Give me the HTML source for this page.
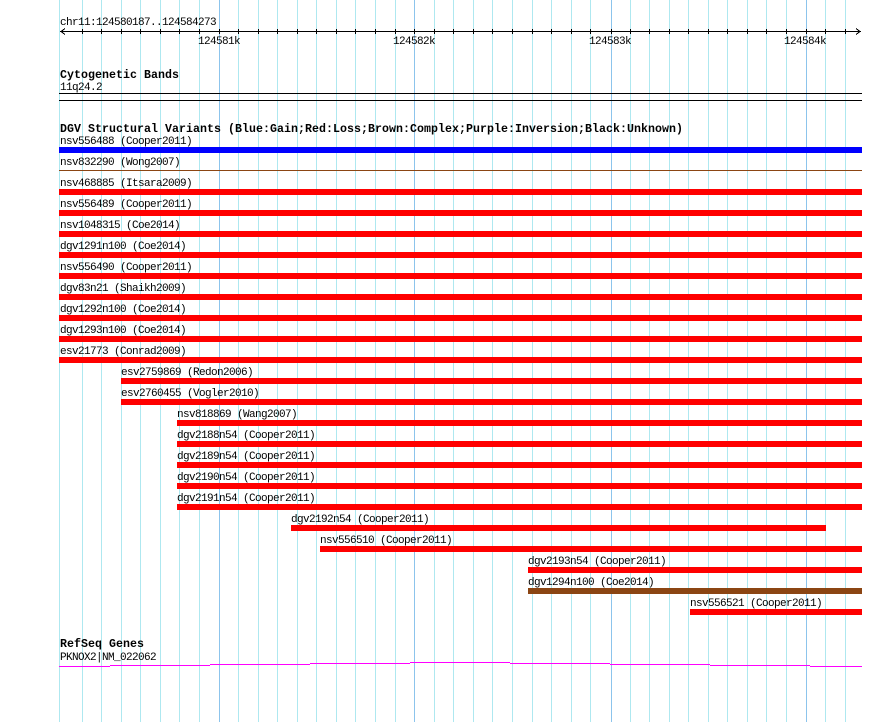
<!DOCTYPE html>
<html><head><meta charset="utf-8"><style>
html,body{margin:0;padding:0;background:#fff;width:890px;height:722px;overflow:hidden}
svg{display:block}
text{font-family:"Liberation Mono","DejaVu Sans Mono",monospace;font-size:11px;letter-spacing:-0.6px;fill:#000}
.b{font-weight:bold;font-size:11.6px;letter-spacing:0}
</style></head><body>
<svg width="890" height="722" viewBox="0 0 890 722" shape-rendering="crispEdges">
<g stroke="#aee8f0" stroke-width="1">
<line x1="59.5" y1="0" x2="59.5" y2="722"/>
<line x1="82.5" y1="0" x2="82.5" y2="722"/>
<line x1="101.5" y1="0" x2="101.5" y2="722"/>
<line x1="121.5" y1="0" x2="121.5" y2="722"/>
<line x1="140.5" y1="0" x2="140.5" y2="722"/>
<line x1="160.5" y1="0" x2="160.5" y2="722"/>
<line x1="179.5" y1="0" x2="179.5" y2="722"/>
<line x1="199.5" y1="0" x2="199.5" y2="722"/>
<line x1="238.5" y1="0" x2="238.5" y2="722"/>
<line x1="258.5" y1="0" x2="258.5" y2="722"/>
<line x1="277.5" y1="0" x2="277.5" y2="722"/>
<line x1="297.5" y1="0" x2="297.5" y2="722"/>
<line x1="316.5" y1="0" x2="316.5" y2="722"/>
<line x1="336.5" y1="0" x2="336.5" y2="722"/>
<line x1="355.5" y1="0" x2="355.5" y2="722"/>
<line x1="375.5" y1="0" x2="375.5" y2="722"/>
<line x1="395.5" y1="0" x2="395.5" y2="722"/>
<line x1="434.5" y1="0" x2="434.5" y2="722"/>
<line x1="453.5" y1="0" x2="453.5" y2="722"/>
<line x1="473.5" y1="0" x2="473.5" y2="722"/>
<line x1="492.5" y1="0" x2="492.5" y2="722"/>
<line x1="512.5" y1="0" x2="512.5" y2="722"/>
<line x1="532.5" y1="0" x2="532.5" y2="722"/>
<line x1="551.5" y1="0" x2="551.5" y2="722"/>
<line x1="571.5" y1="0" x2="571.5" y2="722"/>
<line x1="590.5" y1="0" x2="590.5" y2="722"/>
<line x1="630.5" y1="0" x2="630.5" y2="722"/>
<line x1="649.5" y1="0" x2="649.5" y2="722"/>
<line x1="669.5" y1="0" x2="669.5" y2="722"/>
<line x1="688.5" y1="0" x2="688.5" y2="722"/>
<line x1="708.5" y1="0" x2="708.5" y2="722"/>
<line x1="727.5" y1="0" x2="727.5" y2="722"/>
<line x1="747.5" y1="0" x2="747.5" y2="722"/>
<line x1="766.5" y1="0" x2="766.5" y2="722"/>
<line x1="786.5" y1="0" x2="786.5" y2="722"/>
<line x1="825.5" y1="0" x2="825.5" y2="722"/>
<line x1="845.5" y1="0" x2="845.5" y2="722"/>
</g>
<g stroke="#8cc4ec" stroke-width="1">
<line x1="219.5" y1="0" x2="219.5" y2="722"/>
<line x1="414.5" y1="0" x2="414.5" y2="722"/>
<line x1="611.5" y1="0" x2="611.5" y2="722"/>
<line x1="806.5" y1="0" x2="806.5" y2="722"/>
</g>
<text x="60" y="25">chr11:124580187..124584273</text>
<g stroke="#000" stroke-width="1">
<line x1="60" y1="31.5" x2="861" y2="31.5"/>
<polyline points="65,28.5 61,31.5 65,34.5" fill="none"/>
<polyline points="856,28.5 860,31.5 856,34.5" fill="none"/>
<path d="M82.5 29v5M101.5 29v5M121.5 29v5M140.5 29v5M160.5 29v5M179.5 29v5M199.5 29v5M219.5 29v5M238.5 29v5M258.5 29v5M277.5 29v5M297.5 29v5M316.5 29v5M336.5 29v5M355.5 29v5M375.5 29v5M395.5 29v5M414.5 29v5M434.5 29v5M453.5 29v5M473.5 29v5M492.5 29v5M512.5 29v5M532.5 29v5M551.5 29v5M571.5 29v5M590.5 29v5M611.5 29v5M630.5 29v5M649.5 29v5M669.5 29v5M688.5 29v5M708.5 29v5M727.5 29v5M747.5 29v5M766.5 29v5M786.5 29v5M806.5 29v5M825.5 29v5M845.5 29v5"/>
</g>
<text x="198" y="44">124581k</text>
<text x="393" y="44">124582k</text>
<text x="589" y="44">124583k</text>
<text x="784" y="44">124584k</text>
<text class="b" x="60" y="78" textLength="119">Cytogenetic Bands</text>
<text x="60" y="90">11q24.2</text>
<rect x="59" y="93" width="803" height="1" fill="#000"/>
<rect x="59" y="100" width="803" height="1" fill="#000"/>
<text class="b" x="60" y="132" textLength="623">DGV Structural Variants (Blue:Gain;Red:Loss;Brown:Complex;Purple:Inversion;Black:Unknown)</text>
<g>
<text x="60" y="144">nsv556488 (Cooper2011)</text><rect x="59" y="147" width="803" height="6" fill="#0000ff"/>
<text x="60" y="165">nsv832290 (Wong2007)</text><rect x="59" y="170" width="803" height="1" fill="#8b4513"/>
<text x="60" y="186">nsv468885 (Itsara2009)</text><rect x="59" y="189" width="803" height="6" fill="#ff0000"/>
<text x="60" y="207">nsv556489 (Cooper2011)</text><rect x="59" y="210" width="803" height="6" fill="#ff0000"/>
<text x="60" y="228">nsv1048315 (Coe2014)</text><rect x="59" y="231" width="803" height="6" fill="#ff0000"/>
<text x="60" y="249">dgv1291n100 (Coe2014)</text><rect x="59" y="252" width="803" height="6" fill="#ff0000"/>
<text x="60" y="270">nsv556490 (Cooper2011)</text><rect x="59" y="273" width="803" height="6" fill="#ff0000"/>
<text x="60" y="291">dgv83n21 (Shaikh2009)</text><rect x="59" y="294" width="803" height="6" fill="#ff0000"/>
<text x="60" y="312">dgv1292n100 (Coe2014)</text><rect x="59" y="315" width="803" height="6" fill="#ff0000"/>
<text x="60" y="333">dgv1293n100 (Coe2014)</text><rect x="59" y="336" width="803" height="6" fill="#ff0000"/>
<text x="60" y="354">esv21773 (Conrad2009)</text><rect x="59" y="357" width="803" height="6" fill="#ff0000"/>
<text x="121" y="375">esv2759869 (Redon2006)</text><rect x="121" y="378" width="741" height="6" fill="#ff0000"/>
<text x="121" y="396">esv2760455 (Vogler2010)</text><rect x="121" y="399" width="741" height="6" fill="#ff0000"/>
<text x="177" y="417">nsv818869 (Wang2007)</text><rect x="177" y="420" width="685" height="6" fill="#ff0000"/>
<text x="177" y="438">dgv2188n54 (Cooper2011)</text><rect x="177" y="441" width="685" height="6" fill="#ff0000"/>
<text x="177" y="459">dgv2189n54 (Cooper2011)</text><rect x="177" y="462" width="685" height="6" fill="#ff0000"/>
<text x="177" y="480">dgv2190n54 (Cooper2011)</text><rect x="177" y="483" width="685" height="6" fill="#ff0000"/>
<text x="177" y="501">dgv2191n54 (Cooper2011)</text><rect x="177" y="504" width="685" height="6" fill="#ff0000"/>
<text x="291" y="522">dgv2192n54 (Cooper2011)</text><rect x="291" y="525" width="535" height="6" fill="#ff0000"/>
<text x="320" y="543">nsv556510 (Cooper2011)</text><rect x="320" y="546" width="542" height="6" fill="#ff0000"/>
<text x="528" y="564">dgv2193n54 (Cooper2011)</text><rect x="528" y="567" width="334" height="6" fill="#ff0000"/>
<text x="528" y="585">dgv1294n100 (Coe2014)</text><rect x="528" y="588" width="334" height="6" fill="#8b4513"/>
<text x="690" y="606">nsv556521 (Cooper2011)</text><rect x="690" y="609" width="172" height="6" fill="#ff0000"/>
</g>
<text class="b" x="60" y="647" textLength="84">RefSeq Genes</text>
<text x="60" y="660">PKNOX2|NM_022062</text>
<g fill="#ff00ff">
<rect x="59" y="666" width="51" height="1"/>
<rect x="110" y="665" width="100" height="1"/>
<rect x="210" y="664" width="100" height="1"/>
<rect x="310" y="663" width="100" height="1"/>
<rect x="410" y="662" width="100" height="1"/>
<rect x="510" y="663" width="100" height="1"/>
<rect x="610" y="664" width="100" height="1"/>
<rect x="710" y="665" width="100" height="1"/>
<rect x="810" y="666" width="52" height="1"/>
</g>
</svg>
</body></html>
